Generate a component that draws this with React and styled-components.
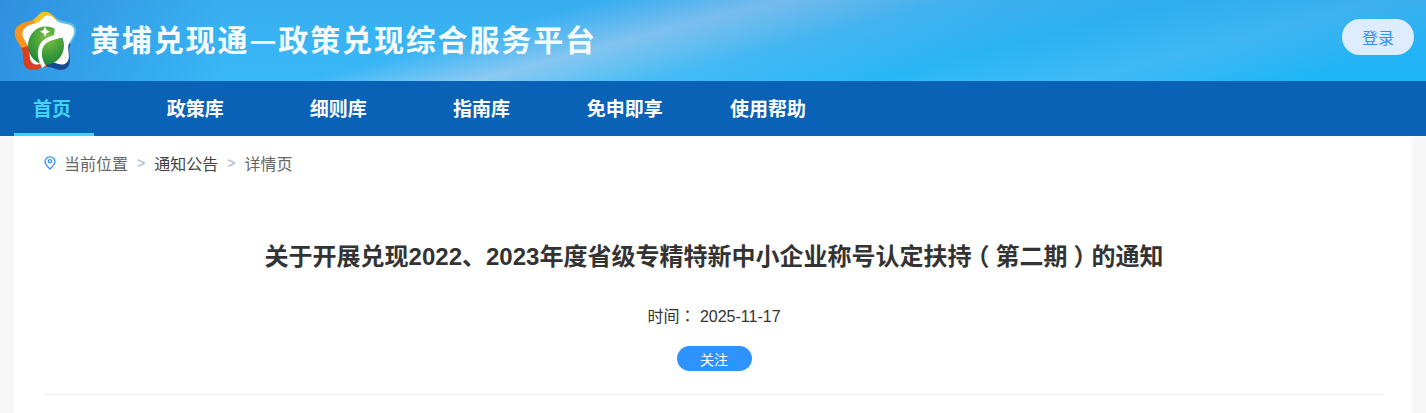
import styled, { createGlobalStyle } from "styled-components";

const GlobalStyle = createGlobalStyle`
  html, body {
    margin: 0;
    padding: 0;
    background: #f7f7f7;
    font-family: "Liberation Sans", "Noto Sans CJK SC", sans-serif;
  }
`;

const navItems = ["首页", "政策库", "细则库", "指南库", "免申即享", "使用帮助"];

const starPath =
  "M31 3C37 3 40 9 45 11C51 13 60 12 62 19C64 26 55 32 55 39C55 45 58 52 53 56C47 61 39 55 33 55C27 55 18 61 12 56C8 52 10 45 8 39C6 33-1 28 1 21C3 14 13 13 19 11C23 9 25 3 31 3z";

function Logo() {
  return (
    <LogoSvg viewBox="0 2.5 63 56.5" preserveAspectRatio="none" aria-hidden="true">
      <defs>
        <clipPath id="star">
          <path d={starPath} />
        </clipPath>
        <radialGradient id="ball" cx="0.55" cy="0.3" r="0.8">
          <stop offset="0" stopColor="#7cc242" />
          <stop offset="1" stopColor="#0f7f35" />
        </radialGradient>
      </defs>
      <g clipPath="url(#star)">
        <polygon points="31,32 10,-4 52,-4 48,12" fill="#f7c01d" />
        <polygon points="31,32 10,-4 -6,-4 -6,40 8,44" fill="#f7931e" />
        <polygon points="31,32 -6,40 -6,66 34,66" fill="#d8401f" />
        <polygon points="31,32 34,66 70,66 70,34" fill="#174a8c" />
        <polygon points="31,32 70,34 70,-4 48,-4" fill="#5fc0e4" />
      </g>
      {/* white inner blob, pushed a little to the right so the left rim is thicker */}
      <path d={starPath} fill="#fff" transform="translate(34 31) scale(0.84) translate(-31 -32)" />
      <circle cx="32" cy="35" r="18" fill="url(#ball)" />
      <path d="M41 15L53 25L40 27z" fill="#fff" />
      <path d="M30 55C24 46 24 35 33 30C39 27 45 26 52 25" fill="none" stroke="#fff" strokeWidth="4" />
      <path d="M31 17l1.5 3.5 3.5 1.5-3.5 1.5-1.5 3.5-1.5-3.5-3.5-1.5 3.5-1.5z" fill="#fff" />
    </LogoSvg>
  );
}

function PinIcon() {
  return (
    <PinSvg viewBox="0 0 12 14" aria-hidden="true">
      <path
        d="M6 13C3.5 10.5 1 8.2 1 5.4A5 4.6 0 0 1 11 5.4C11 8.2 8.5 10.5 6 13z"
        fill="none"
        stroke="#2e93ff"
        strokeWidth="1.3"
      />
      <circle cx="6" cy="5.3" r="1.7" fill="none" stroke="#2e93ff" strokeWidth="1.2" />
    </PinSvg>
  );
}

export default function App() {
  return (
    <>
      <GlobalStyle />
      <Banner>
        <Brand>
          <Logo />
          <BrandName>黄埔兑现通—政策兑现综合服务平台</BrandName>
        </Brand>
        <LoginButton>登录</LoginButton>
      </Banner>
      <Nav>
        {navItems.map((item, i) => (
          <NavItem key={item} $active={i === 0}>
            {item}
          </NavItem>
        ))}
      </Nav>
      <Main>
        <Crumbs>
          <PinIcon />
          <Crumb $muted>当前位置</Crumb>
          <CrumbSep>&gt;</CrumbSep>
          <Crumb>通知公告</Crumb>
          <CrumbSep>&gt;</CrumbSep>
          <Crumb $muted>详情页</Crumb>
        </Crumbs>
        <Article>
          <Title>
            关于开展兑现2022、2023年度省级专精特新中小企业称号认定扶持
            <Paren>（</Paren>第二期<Paren>）</Paren>的通知
          </Title>
          <Meta>
            时间<Colon>：</Colon> 2025-11-17
          </Meta>
          <FollowButton>关注</FollowButton>
        </Article>
      </Main>
    </>
  );
}

const Banner = styled.header`
  height: 81px;
  display: flex;
  align-items: center;
  justify-content: space-between;
  padding: 0 12px 0 14px;
  box-sizing: border-box;
  background:
    linear-gradient(90deg, rgba(40, 120, 210, 0.55) 0%, rgba(40, 120, 210, 0) 16%),
    linear-gradient(180deg, rgba(60, 150, 220, 0.3) 0%, rgba(60, 150, 220, 0) 100%),
    linear-gradient(
      165deg,
      #38b8f7 0%,
      #38b8f7 35%,
      #8ccaf3 45%,
      #45bcf6 55%,
      #28b7f7 68%,
      #3fbcf6 80%,
      #1fb6f8 92%,
      #1fb6f8 100%
    );
`;

const Brand = styled.div`
  display: flex;
  align-items: center;
  gap: 13px;
`;

const LogoSvg = styled.svg`
  width: 63px;
  height: 60px;
  display: block;
  margin-top: 1px;
`;

const BrandName = styled.div`
  font-family: "Noto Sans CJK SC", sans-serif;
  font-size: 30px;
  font-weight: 700;
  letter-spacing: 1.85px;
  padding-bottom: 6px;
  color: #f4fbff;
  white-space: nowrap;
  line-height: 40px;
`;

const LoginButton = styled.button`
  width: 72px;
  height: 36px;
  border: 0;
  border-radius: 18px;
  background: #ddedff;
  color: #2e8fff;
  font-family: inherit;
  font-size: 16px;
  padding: 0;
  margin-top: -7px;
`;

const Nav = styled.nav`
  height: 55px;
  display: flex;
  gap: 63.2px;
  padding-left: 14px;
  background: #0a62b6;
`;

const NavItem = styled.div`
  width: 80px;
  flex: none;
  box-sizing: border-box;
  display: flex;
  align-items: center;
  justify-content: center;
  white-space: nowrap;
  font-size: 19px;
  font-weight: 700;
  color: ${(p) => (p.$active ? "#42d4f7" : "#fff")};
  border-bottom: 3px solid ${(p) => (p.$active ? "#42d4f7" : "transparent")};
  padding: 1px 4px 0 0;
`;

const Main = styled.main`
  margin: 0 14px;
  background: #fff;
  padding: 0 28px 0 30px;
  height: 277px;
`;

const Crumbs = styled.div`
  display: flex;
  align-items: center;
  height: 54px;
  font-size: 16px;
`;

const PinSvg = styled.svg`
  width: 12px;
  height: 14px;
  margin-right: 8px;
`;

const Crumb = styled.span`
  color: ${(p) => (p.$muted ? "#666" : "#444")};
`;

const CrumbSep = styled.span`
  color: #bcc3cd;
  margin: 0 9px;
  font-size: 14px;
  font-weight: 700;
`;

const Article = styled.article`
  display: flex;
  flex-direction: column;
  align-items: center;
  height: 205px;
  box-sizing: border-box;
  padding-top: 47px;
  border-bottom: 1px solid #eee;
`;

const Title = styled.h1`
  margin: 0;
  font-size: 24px;
  line-height: 40px;
  font-weight: 700;
  color: #333;
  white-space: nowrap;
`;

// half-width bracket glyph with padding, so it sits in the middle of a full cell
const Paren = styled.span`
  font-feature-settings: "halt";
  padding: 0 6px;
`;

const Colon = styled.span`
  font-family: "Noto Sans CJK TC", sans-serif;
`;

const Meta = styled.div`
  margin-top: 28px;
  font-size: 16px;
  line-height: 20px;
  color: #333;
`;

const FollowButton = styled.button`
  margin-top: 19px;
  width: 75px;
  height: 25px;
  border: 0;
  border-radius: 13px;
  background: #2e93ff;
  color: #fff;
  font-family: inherit;
  font-size: 14px;
  padding: 0;
`;
